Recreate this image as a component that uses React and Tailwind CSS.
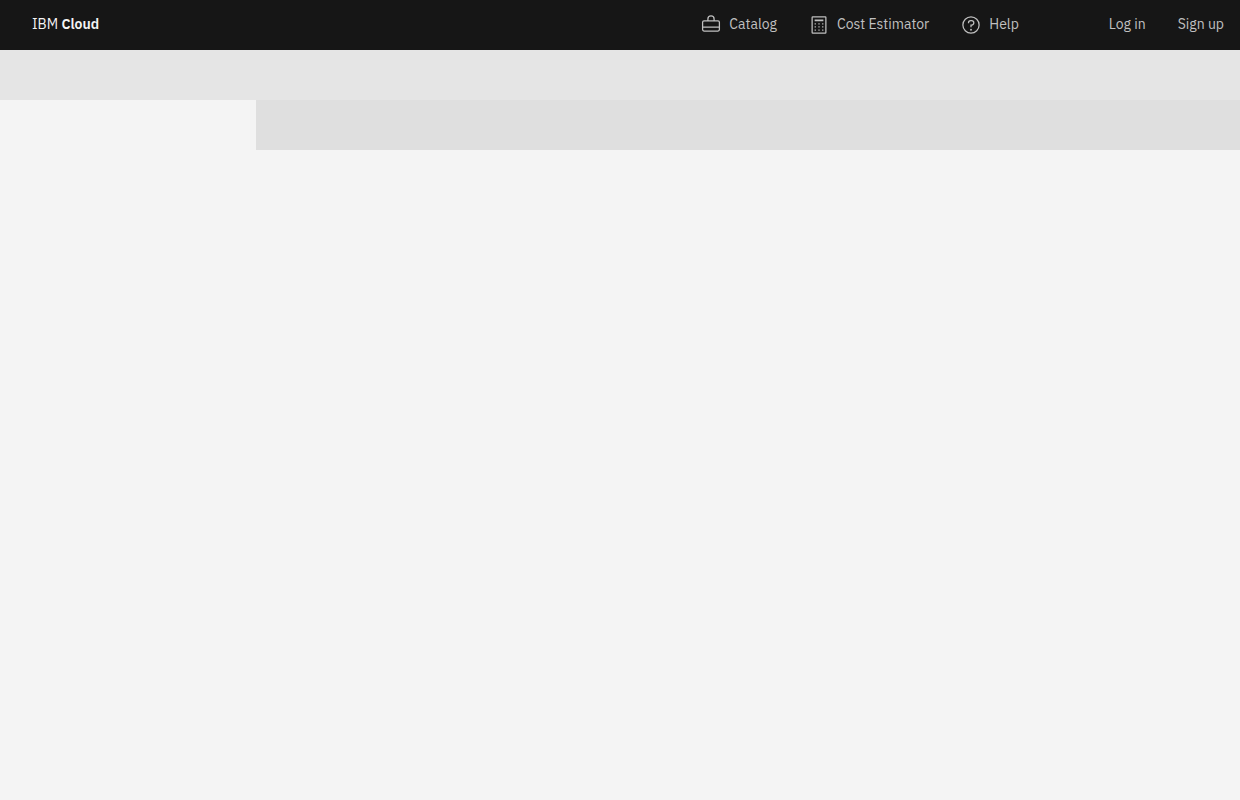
function CatalogIcon() {
    return (
        <svg className="w-5 h-5" viewBox="0 0 20 20" fill="none" stroke="currentColor" strokeWidth="1.25" aria-hidden="true">
            <rect x="1.6" y="5.9" width="16.8" height="10.1" rx="1.4" />
            <path d="M1.6 12.1h16.8M6.9 5.9V4a3.1 3.1 0 0 1 6.2 0v1.9" />
        </svg>
    );
}

function CalculatorIcon() {
    return (
        <svg className="w-5 h-5" viewBox="0 0 32 32" fill="currentColor" aria-hidden="true">
            <path d="M26 4v24H6V4h20m0-2H6a2 2 0 0 0-2 2v24a2 2 0 0 0 2 2h20a2 2 0 0 0 2-2V4a2 2 0 0 0-2-2z" />
            <path d="M9 7h14v3H9zM9 13h2v2H9zM15 13h2v2h-2zM21 13h2v2h-2zM9 18h2v2H9zM15 18h2v2h-2zM21 18h2v2h-2zM9 23h2v2H9zM15 23h2v2h-2zM21 23h2v2h-2z" />
        </svg>
    );
}

function HelpIcon() {
    return (
        <svg className="w-5 h-5" viewBox="0 0 32 32" fill="currentColor" aria-hidden="true">
            <path d="M16 2a14 14 0 1 0 14 14A14 14 0 0 0 16 2zm0 26a12 12 0 1 1 12-12 12 12 0 0 1-12 12z" />
            <circle cx="16" cy="23.5" r="1.5" />
            <path d="M17 8h-1.5a4.49 4.49 0 0 0-4.5 4.5v.5h2v-.5a2.5 2.5 0 0 1 2.5-2.5H17a2.5 2.5 0 0 1 0 5h-2v4.5h2V17a4.5 4.5 0 0 0 0-9z" />
        </svg>
    );
}

const links = [
    { label: 'Catalog', icon: CatalogIcon },
    { label: 'Cost Estimator', icon: CalculatorIcon },
    { label: 'Help', icon: HelpIcon },
];

export default function App() {
    return (
        <div className="flex flex-col min-h-screen bg-[#f4f4f4] font-['IBM_Plex_Sans','Roboto',sans-serif] text-sm">
            <header className="flex items-center justify-between h-[50px] pl-8 pr-4 bg-[#161616] text-[#c0c0c0]">
                <a href="#" className="pb-0.5 text-[#f4f4f4] whitespace-nowrap">
                    IBM <span className="font-semibold">Cloud</span>
                </a>

                <div className="flex items-center gap-[90px] whitespace-nowrap">
                    <nav className="flex items-center gap-8">
                        {links.map(({ label, icon: Icon }) => (
                            <a key={label} href="#" className="flex items-center gap-2">
                                <Icon />
                                <span className="pb-0.5">{label}</span>
                            </a>
                        ))}
                    </nav>

                    <div className="flex items-center gap-8">
                        <a href="#" className="pb-0.5">Log in</a>
                        <a href="#" className="pb-0.5">Sign up</a>
                    </div>
                </div>
            </header>

            {/* Loading placeholders */}
            <div className="h-[50px] bg-[#e5e5e5]" />
            <div className="flex flex-1">
                <aside className="w-64 shrink-0" />
                <main className="flex-1">
                    <div className="h-[50px] bg-[#dfdfdf]" />
                </main>
            </div>
        </div>
    );
}
